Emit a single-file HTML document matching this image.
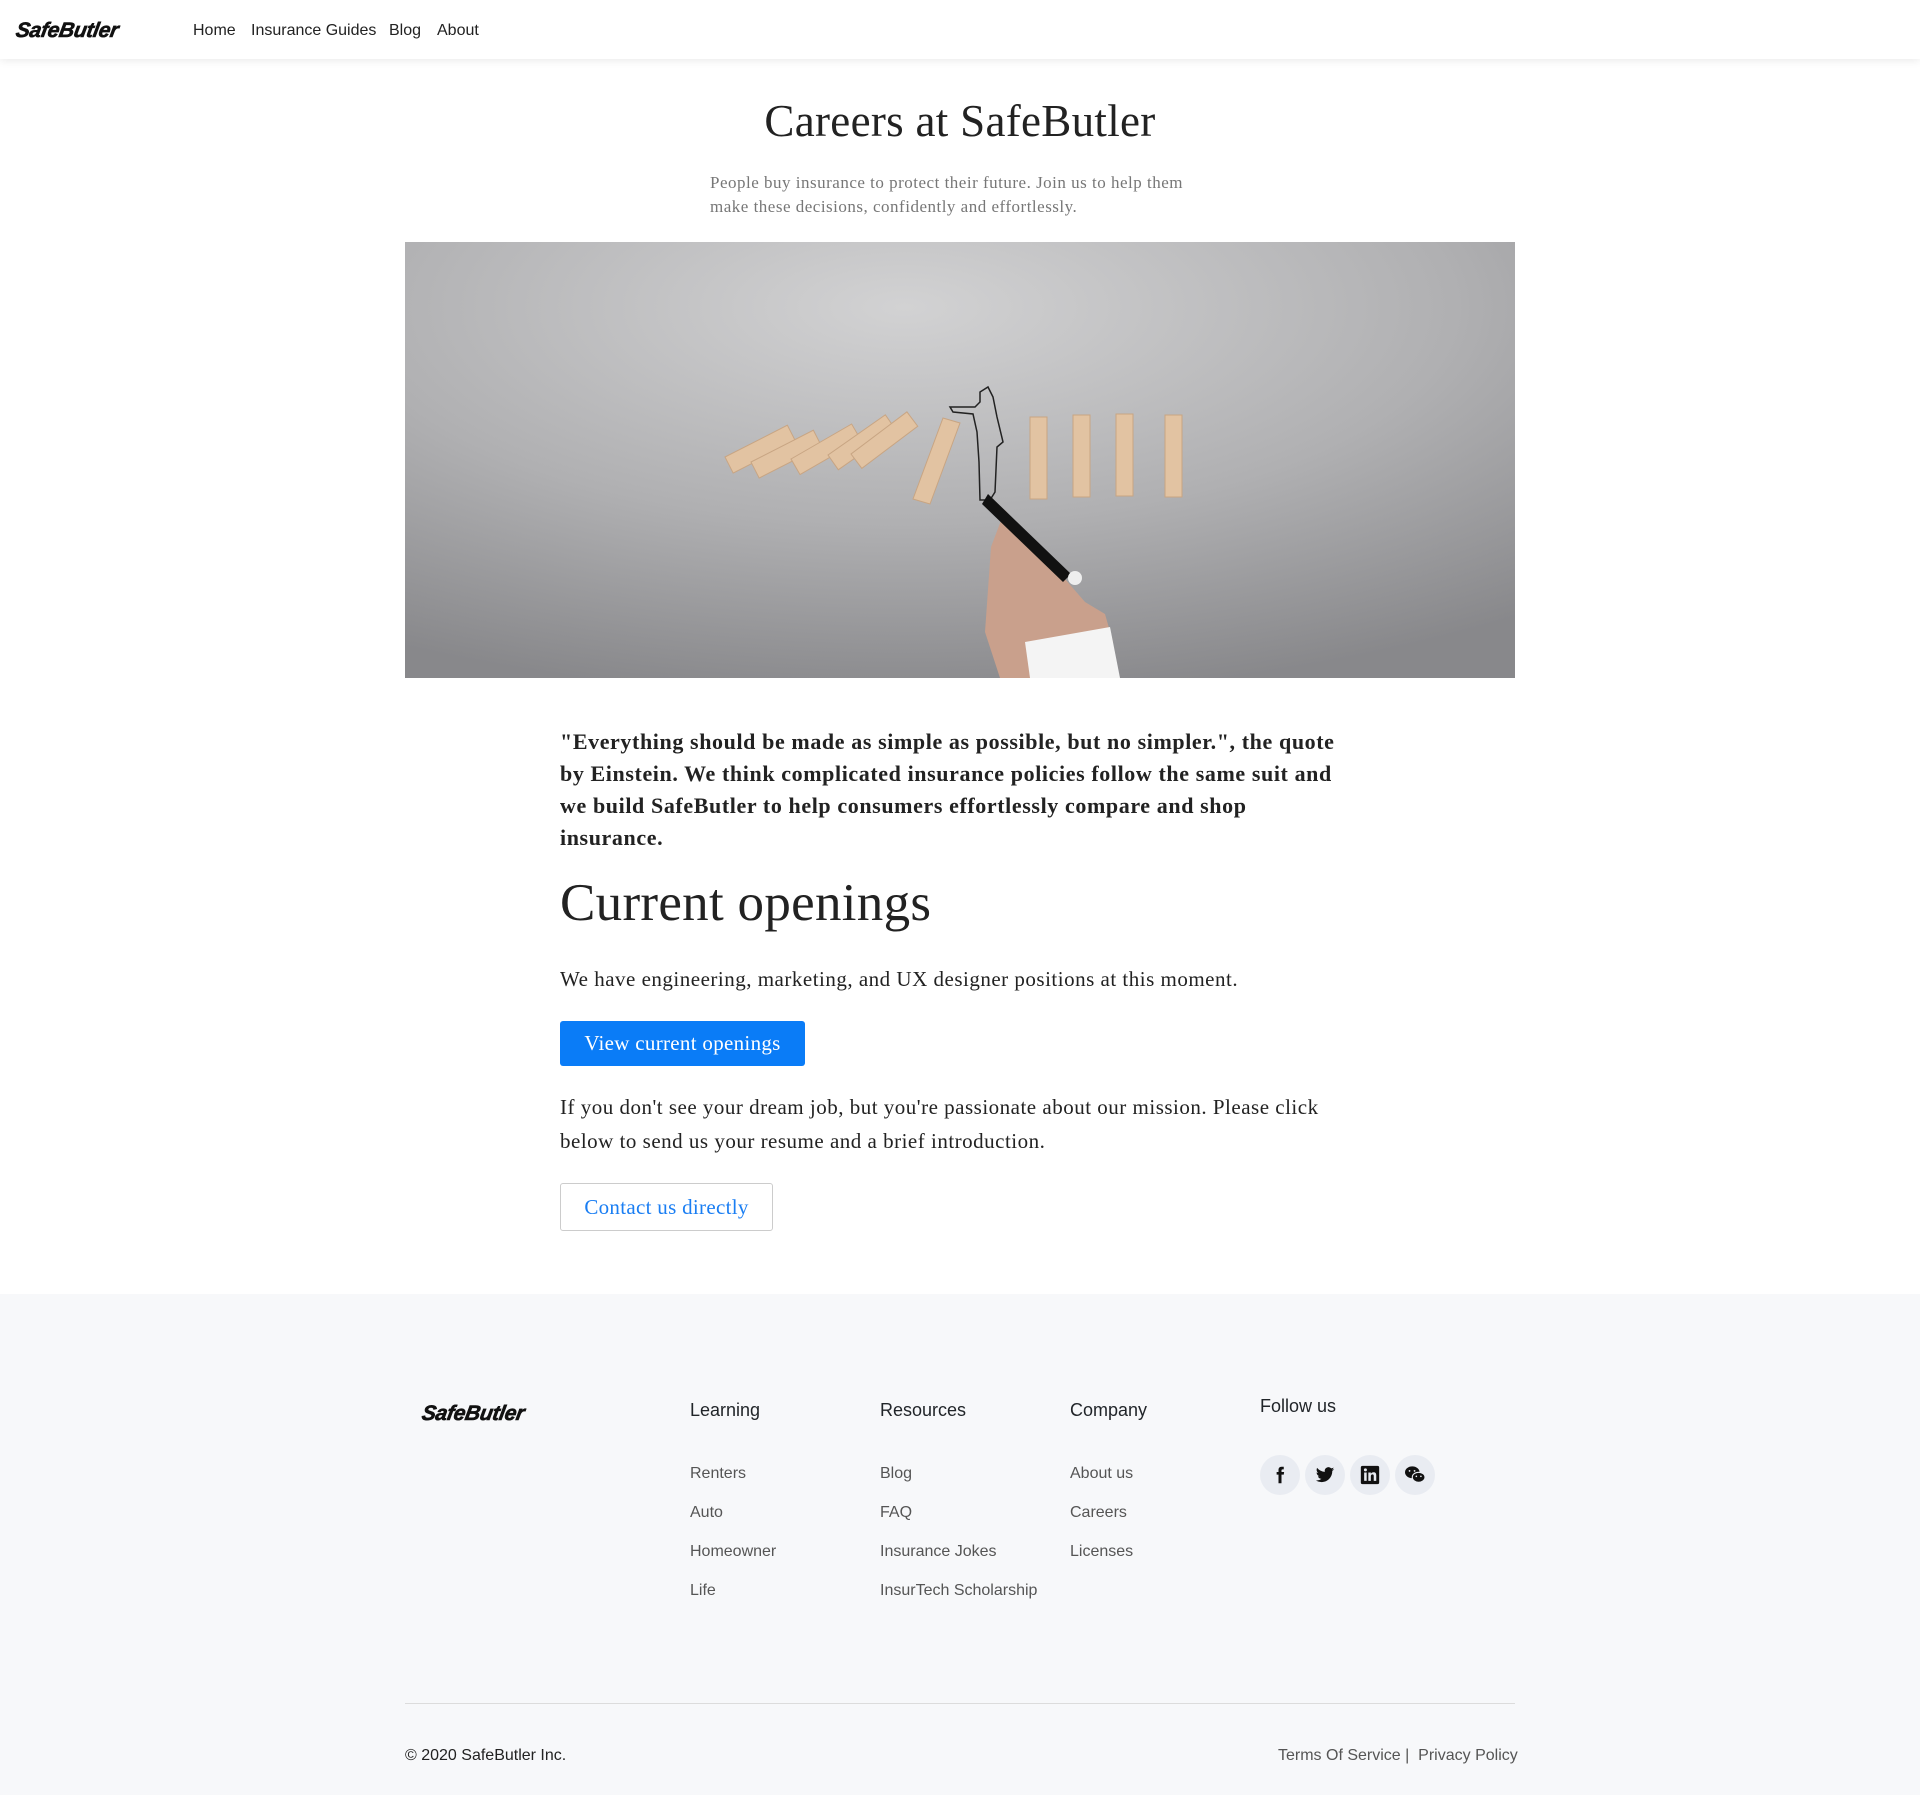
<!DOCTYPE html>
<html><head><meta charset="utf-8"><style>
*{box-sizing:border-box;margin:0;padding:0}
body{width:1920px;height:1795px;background:#fff;font-family:"Liberation Sans",sans-serif;color:#212529;position:relative;overflow:hidden}
.a{position:absolute;white-space:nowrap}
.logo{font-family:"Liberation Sans",sans-serif;font-weight:bold;font-style:italic;font-size:21px;letter-spacing:-0.3px;color:#111;transform:skewX(-10deg);-webkit-text-stroke:0.6px #111}
header{position:absolute;left:0;top:0;width:1920px;height:59px;background:#fff;box-shadow:0 2px 8px rgba(0,0,0,.08)}
.nav{font-size:16px;color:#222;top:22px}
.serif{font-family:"Liberation Serif",serif;letter-spacing:0.3px}
footer{position:absolute;left:0;top:1294px;width:1920px;height:501px;background:#f7f8fa}
.fh{font-size:18px;color:#212529;top:1400px}
.fl{font-size:16px;color:#555}
.ic{position:absolute;top:1455px;width:40px;height:40px;border-radius:50%;background:#e9ecf2;display:flex;align-items:center;justify-content:center}
</style></head><body>
<header>
<div class="a logo" style="left:16px;top:19px">SafeButler</div>
<div class="a nav" style="left:193px">Home</div>
<div class="a nav" style="left:251px">Insurance Guides</div>
<div class="a nav" style="left:389px">Blog</div>
<div class="a nav" style="left:437px">About</div>
</header>

<div class="a serif" style="left:0;width:1920px;text-align:center;top:95px;font-size:45px;color:#222">Careers at SafeButler</div>
<div class="a serif" style="left:710px;top:171px;font-size:17px;line-height:24px;color:#777;white-space:normal;width:510px;letter-spacing:0.5px">People buy insurance to protect their future. Join us to help them make these decisions, confidently and effortlessly.</div>

<svg class="a" style="left:405px;top:242px" width="1110" height="436" viewBox="0 0 1110 436">
<defs><radialGradient id="g" cx="0.45" cy="0.15" r="0.9"><stop offset="0" stop-color="#d2d2d3"/><stop offset="0.55" stop-color="#b0b0b2"/><stop offset="1" stop-color="#88888b"/></radialGradient></defs>
<rect width="1110" height="436" fill="url(#g)"/>
<g fill="#e2c3a2" stroke="#c8a583" stroke-width="1">
<rect x="320" y="215" width="70" height="18" transform="rotate(-27 320 215)"/>
<rect x="346" y="220" width="70" height="18" transform="rotate(-27 346 220)"/>
<rect x="386" y="217" width="70" height="18" transform="rotate(-30 386 217)"/>
<rect x="423" y="213" width="70" height="18" transform="rotate(-35 423 213)"/>
<rect x="446" y="212" width="70" height="18" transform="rotate(-37 446 212)"/>
<polygon points="538,176 555,181 525,262 508,257"/>
<rect x="625" y="175" width="17" height="82"/>
<rect x="668" y="173" width="17" height="82"/>
<rect x="711" y="172" width="17" height="82"/>
<rect x="760" y="173" width="17" height="82"/>
</g>
<path d="M545 165 L570 165 L575 160 L575 150 L583 145 L588 155 L592 175 L598 200 L592 205 L590 250 L585 258 L575 258 L574 220 L572 190 L568 172 L548 170 Z" fill="none" stroke="#222" stroke-width="1.5"/>
<path d="M600 268 L680 360 L700 372 L708 400 L705 436 L595 436 L580 390 L586 305 Z" fill="#c9a08c"/>
<path d="M583 252 L666 332 L658 340 L577 262 Z" fill="#111"/>
<circle cx="670" cy="336" r="7" fill="#eee"/>
<path d="M620 400 L705 385 L715 436 L625 436 Z" fill="#f4f4f4"/>
</svg>

<div class="a serif" style="left:560px;top:726px;width:790px;white-space:normal;font-size:22px;line-height:32px;font-weight:bold;color:#222;letter-spacing:0.6px">"Everything should be made as simple as possible, but no simpler.", the quote by Einstein. We think complicated insurance policies follow the same suit and we build SafeButler to help consumers effortlessly compare and shop insurance.</div>
<div class="a serif" style="left:560px;top:873px;font-size:53px;color:#222">Current openings</div>
<div class="a serif" style="left:560px;top:967px;font-size:21px;color:#222;letter-spacing:0.5px">We have engineering, marketing, and UX designer positions at this moment.</div>
<div class="a serif" style="left:560px;top:1021px;width:245px;height:45px;background:#0a7cf7;border-radius:3px;color:#fff;font-size:21px;text-align:center;line-height:45px">View current openings</div>
<div class="a serif" style="left:560px;top:1090px;width:800px;white-space:normal;font-size:21px;line-height:34px;color:#222;letter-spacing:0.5px">If you don't see your dream job, but you're passionate about our mission. Please click below to send us your resume and a brief introduction.</div>
<div class="a serif" style="left:560px;top:1183px;width:213px;height:48px;border:1px solid #ccc;border-radius:3px;color:#1a7ef3;font-size:21px;text-align:center;line-height:46px">Contact us directly</div>

<footer></footer>
<div class="a logo" style="left:422px;top:1402px">SafeButler</div>
<div class="a fh" style="left:690px">Learning</div>
<div class="a fh" style="left:880px">Resources</div>
<div class="a fh" style="left:1070px">Company</div>
<div class="a fh" style="left:1260px;top:1396px">Follow us</div>
<div class="a fl" style="left:690px;top:1465px">Renters</div>
<div class="a fl" style="left:690px;top:1504px">Auto</div>
<div class="a fl" style="left:690px;top:1543px">Homeowner</div>
<div class="a fl" style="left:690px;top:1582px">Life</div>
<div class="a fl" style="left:880px;top:1465px">Blog</div>
<div class="a fl" style="left:880px;top:1504px">FAQ</div>
<div class="a fl" style="left:880px;top:1543px">Insurance Jokes</div>
<div class="a fl" style="left:880px;top:1582px">InsurTech Scholarship</div>
<div class="a fl" style="left:1070px;top:1465px">About us</div>
<div class="a fl" style="left:1070px;top:1504px">Careers</div>
<div class="a fl" style="left:1070px;top:1543px">Licenses</div>

<div class="ic" style="left:1260px"><svg width="18" height="18" viewBox="0 0 24 24"><path d="M14 8V6c0-1 .5-1.5 1.5-1.5H17V1h-3c-3 0-4 2-4 4.5V8H7.5v3.5H10V23h4V11.5h3l.5-3.5z" fill="#111"/></svg></div>
<div class="ic" style="left:1305px"><svg width="20" height="20" viewBox="0 0 24 24"><path d="M23 5a9 9 0 0 1-2.6.7A4.5 4.5 0 0 0 22.4 3a9 9 0 0 1-2.9 1.1 4.5 4.5 0 0 0-7.7 4.1A12.8 12.8 0 0 1 2.5 3.5a4.5 4.5 0 0 0 1.4 6 4.5 4.5 0 0 1-2-.6 4.5 4.5 0 0 0 3.6 4.5 4.5 4.5 0 0 1-2 .1 4.5 4.5 0 0 0 4.2 3.1A9 9 0 0 1 1 18.5 12.8 12.8 0 0 0 7.9 20.5c8.300 0 12.8-6.9 12.8-12.8v-.6A9 9 0 0 0 23 5z" fill="#111"/></svg></div>
<div class="ic" style="left:1350px"><svg width="20" height="20" viewBox="0 0 24 24"><rect x="1" y="1" width="22" height="22" rx="2" fill="#111"/><rect x="5" y="9" width="3" height="10" fill="#e9ecf2"/><circle cx="6.5" cy="5.8" r="1.8" fill="#e9ecf2"/><path d="M10 9h3v1.5c.6-1 1.8-1.8 3.3-1.8 2.5 0 3.2 1.6 3.2 4V19h-3v-5.5c0-1.3-.3-2.2-1.5-2.2S13 12.3 13 13.5V19h-3z" fill="#e9ecf2"/></svg></div>
<div class="ic" style="left:1395px"><svg width="22" height="20" viewBox="0 0 24 22"><ellipse cx="9" cy="8" rx="8" ry="6.5" fill="#111"/><ellipse cx="16" cy="13.5" rx="7" ry="5.5" fill="#111" stroke="#e9ecf2" stroke-width="1.2"/><circle cx="6" cy="6.5" r="1" fill="#e9ecf2"/><circle cx="11.5" cy="6.5" r="1" fill="#e9ecf2"/><circle cx="13.5" cy="12.5" r=".9" fill="#e9ecf2"/><circle cx="18.5" cy="12.5" r=".9" fill="#e9ecf2"/></svg></div>

<div class="a" style="left:405px;top:1703px;width:1110px;height:1px;background:#dcdcdc"></div>
<div class="a" style="left:405px;top:1747px;font-size:16px;color:#222">© 2020 SafeButler Inc.</div>
<div class="a fl" style="left:1278px;top:1747px">Terms Of Service |&nbsp; Privacy Policy</div>
</body></html>
